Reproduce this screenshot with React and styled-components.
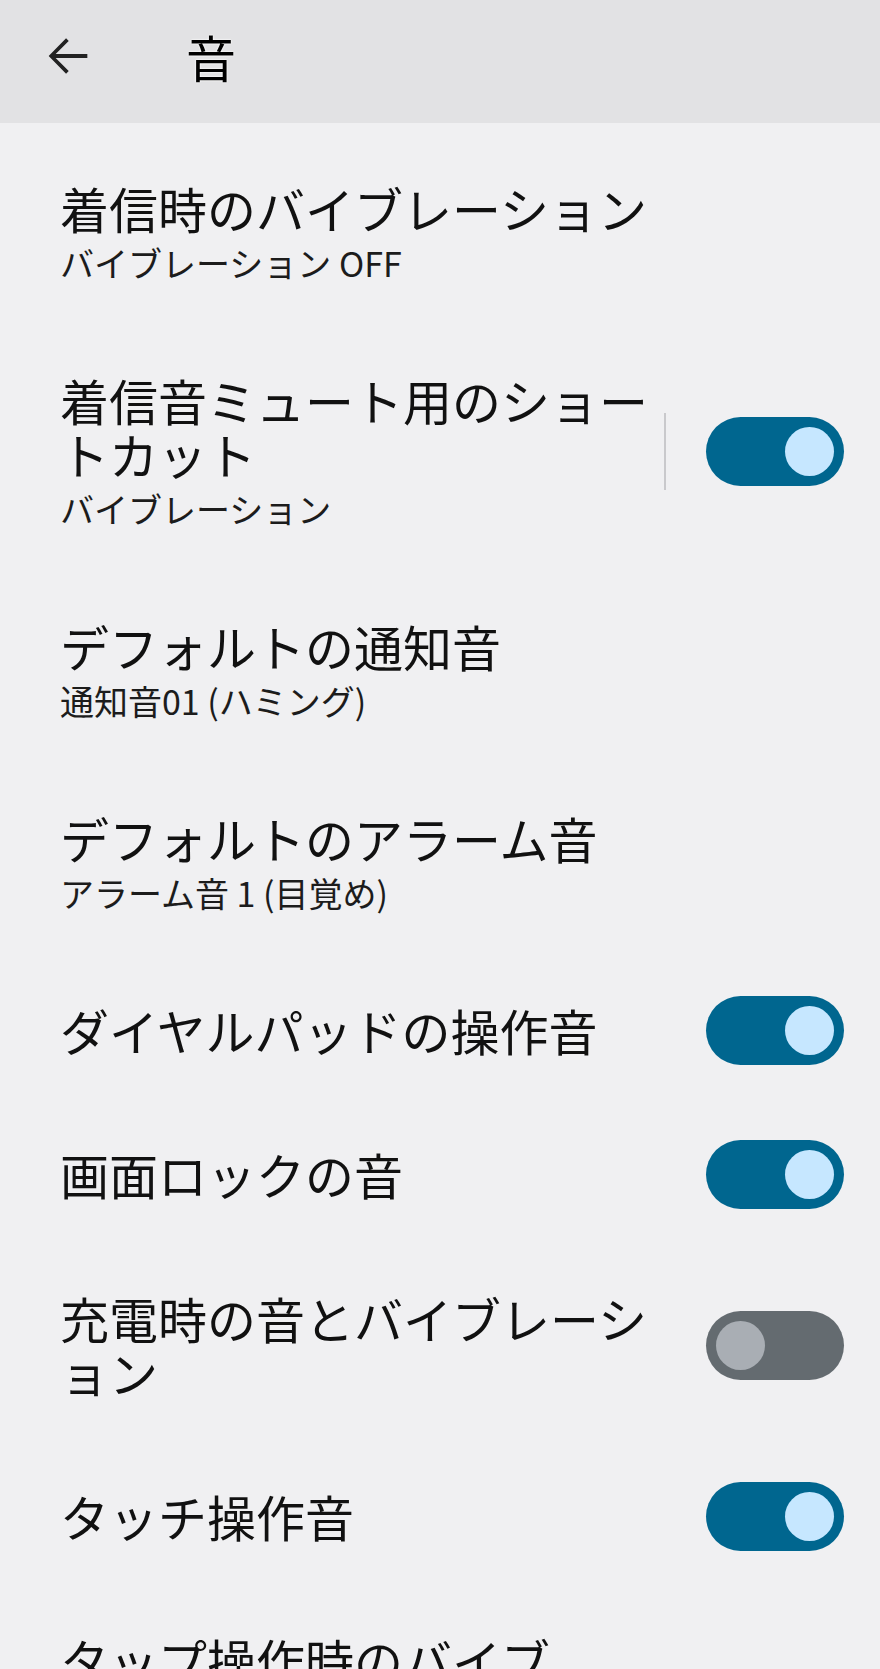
import React from "react";
import styled, { createGlobalStyle } from "styled-components";

const GlobalStyle = createGlobalStyle`
    html, body {
        margin: 0;
        padding: 0;
        background: #f0f0f2;
    }
    body {
        font-family: "Noto Sans CJK JP", "Noto Sans", sans-serif;
        color: #151515;
    }
`

const Page = styled.div`
    width: 880px;
    height: 1669px;
    background: #f0f0f2;
    overflow: hidden;
`

const Header = styled.header`
    height: 123px;
    box-sizing: border-box;
    background: #e2e2e4;
    display: flex;
    align-items: flex-start;
    padding: 27px 0 0 39px;
`

const BackButton = styled.div`
    width: 58px;
    height: 58px;
    display: flex;
    align-items: center;
    justify-content: center;
    color: #222;
`

const Title = styled.h1`
    margin: 0 0 0 89px;
    font-size: 50px;
    font-weight: 400;
    line-height: 58px;
    color: #000;
    text-shadow: 0 0 2px #fff, 0 0 2px #fff;
`

const List = styled.div`
    padding-top: 13px;
`

const Row = styled.div`
    display: flex;
    align-items: center;
    padding: 37px 36px 37px 60px;
`

const TextCol = styled.div`
    flex: 1;
    min-width: 0;
    padding: 8px 0;
`

const ItemTitle = styled.div`
    font-size: 49px;
    line-height: 54px;
    color: #111;
    white-space: pre-line;
`

const ItemSummary = styled.div`
    margin-top: 8px;
    font-size: 34px;
    line-height: 40px;
    color: #1c1c1c;
`

const Side = styled.div`
    width: 185px;
    flex-shrink: 0;
    display: flex;
    align-items: center;
    justify-content: ${p => (p.$divider ? "space-between" : "flex-end")};
`

const Divider = styled.div`
    width: 2px;
    height: 77px;
    margin-left: 5px;
    background: #c9c9cc;
`

const Track = styled.div`
    width: 138px;
    height: 69px;
    box-sizing: border-box;
    border-radius: 35px;
    background: ${p => (p.$on ? "#00668f" : "#646b70")};
    display: flex;
    align-items: center;
    justify-content: ${p => (p.$on ? "flex-end" : "flex-start")};
    padding: 0 10px;
`

const Thumb = styled.div`
    width: 49px;
    height: 49px;
    border-radius: 50%;
    background: ${p => (p.$on ? "#c6e7ff" : "#a9aeb4")};
`

const BackArrow = () => (
    <svg width="58" height="58" viewBox="0 0 24 24" fill="currentColor">
        <path d="M20 11.2H6.9l5.4-5.4-1.1-1.1L4 12l7.2 7.3 1.1-1.1-5.4-5.4H20z" />
    </svg>
)

const Toggle = ({ on }) => (
    <Track $on={on}>
        <Thumb $on={on} />
    </Track>
)

const items = [
    { title: "着信時のバイブレーション", summary: "バイブレーション OFF" },
    { title: "着信音ミュート用のショートカット", summary: "バイブレーション", toggle: true, divider: true },
    { title: "デフォルトの通知音", summary: "通知音01 (ハミング)" },
    { title: "デフォルトのアラーム音", summary: "アラーム音 1 (目覚め)" },
    { title: "ダイヤルパッドの操作音", toggle: true },
    { title: "画面ロックの音", toggle: true },
    { title: "充電時の音とバイブレーション", toggle: true, off: true },
    { title: "タッチ操作音", toggle: true },
    { title: "タップ操作時のバイブ\nレーション" },
]

export default function App() {
    return (
        <>
            <GlobalStyle />
            <Page>
                <Header>
                    <BackButton>
                        <BackArrow />
                    </BackButton>
                    <Title>音</Title>
                </Header>
                <List>
                    {items.map(item => (
                        <Row key={item.title}>
                            <TextCol>
                                <ItemTitle>{item.title}</ItemTitle>
                                {item.summary && <ItemSummary>{item.summary}</ItemSummary>}
                            </TextCol>
                            {item.toggle && (
                                <Side $divider={item.divider}>
                                    {item.divider && <Divider />}
                                    <Toggle on={!item.off} />
                                </Side>
                            )}
                        </Row>
                    ))}
                </List>
            </Page>
        </>
    )
}
